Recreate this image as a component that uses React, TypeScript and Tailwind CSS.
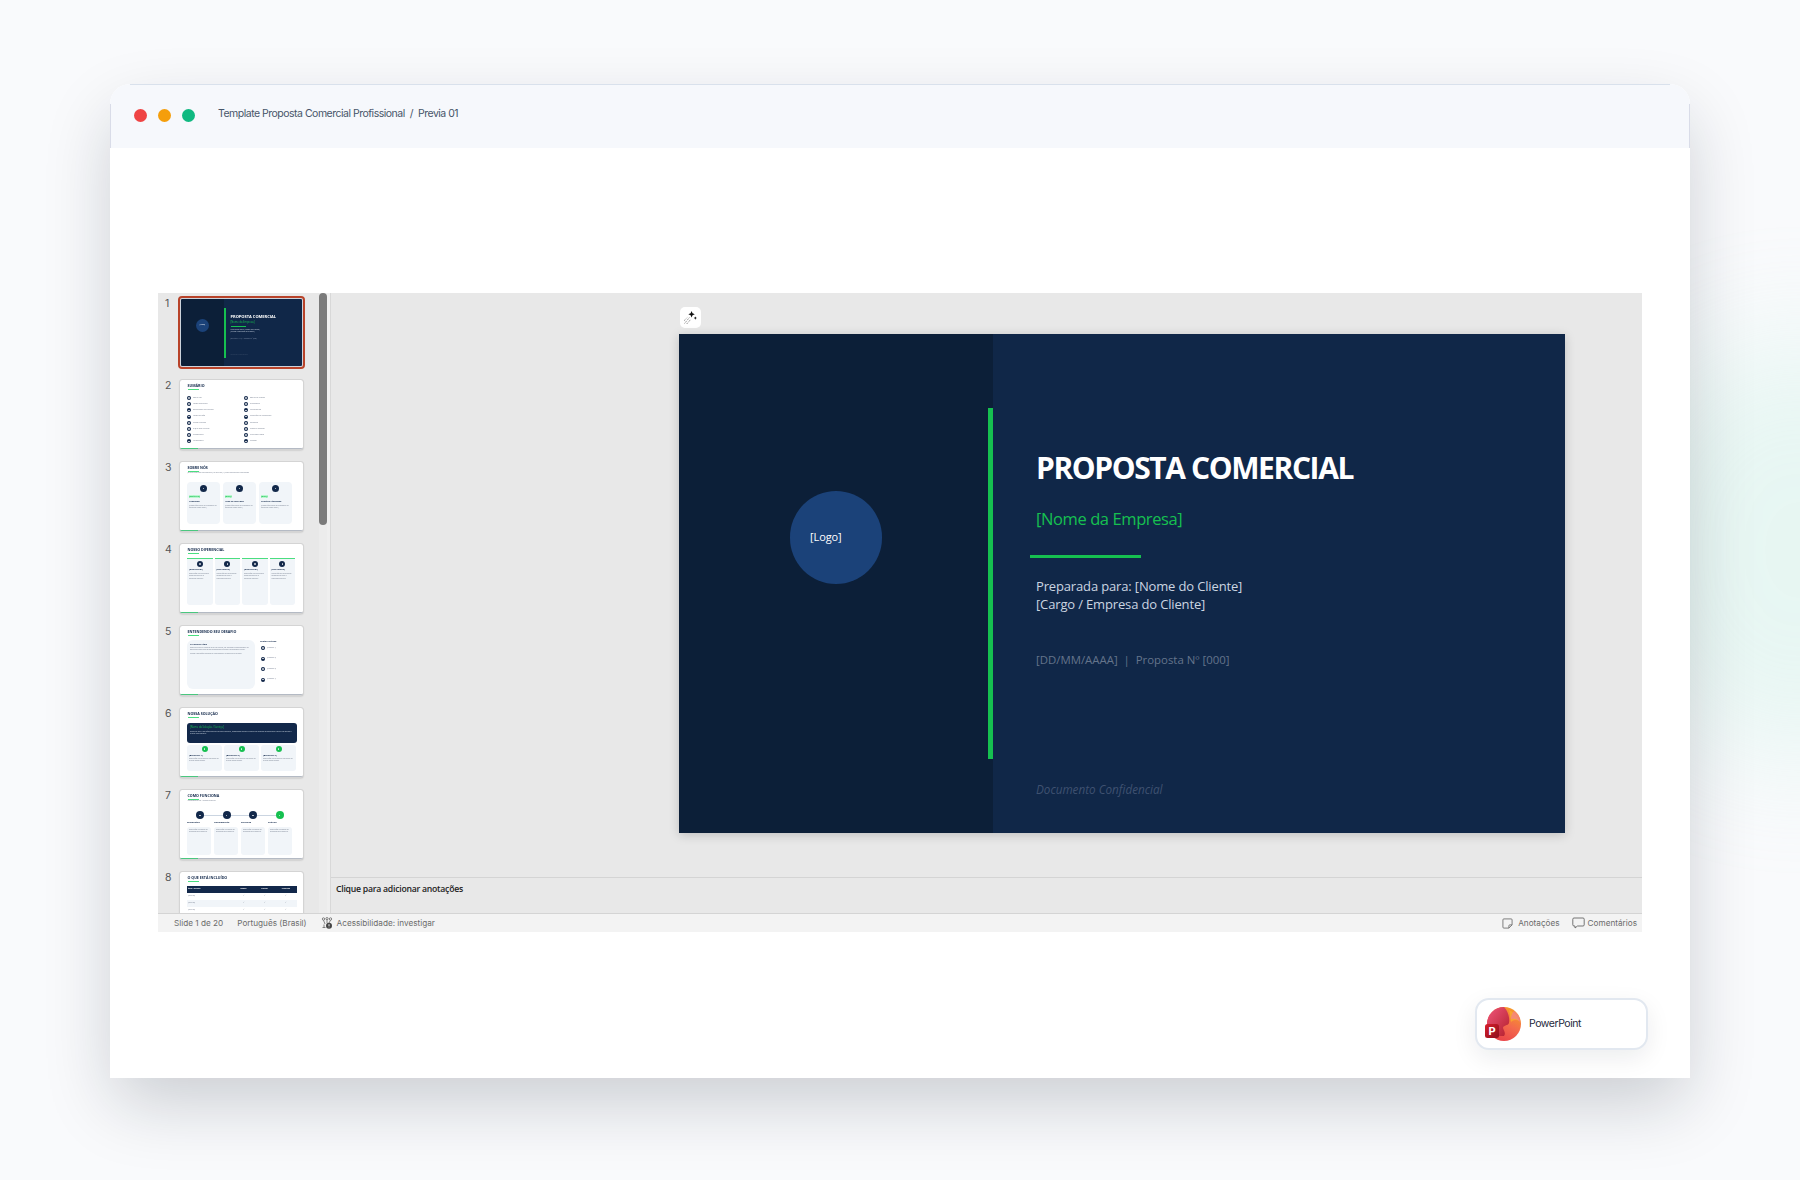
import React from 'react';

const FONT = { fontFamily: '"Open Sans", sans-serif' };

const Thumb: React.FC<{ children: React.ReactNode; selected?: boolean }> = ({ children, selected }) => (
  <div
    className={`relative w-[123px] h-[69px] shrink-0 rounded-[2px] bg-white overflow-hidden ${
      selected ? 'outline-2 outline-[#b8432a] border border-[#cdd3dc]' : 'shadow-[0_1px_2px_rgba(0,0,0,0.3)] outline outline-[#d4d4d4]'
    }`}
  >
    <div className="h-full blur-[0.3px]">{children}</div>
    {!selected && (
      <div className="absolute bottom-0 left-0 right-0 h-[1px] bg-[#b4bac4]">
        <div className="w-[18px] h-[1px] bg-[#4ac77f]" />
      </div>
    )}
  </div>
);

const ThumbTitle: React.FC<{ title: string }> = ({ title }) => (
  <div className="pl-[7.5px] pt-[4px]">
    <div className="text-[3.6px] leading-[4px] font-bold text-[#12284a]">{title}</div>
    <div className="w-[11px] h-[1px] mt-[1px] bg-[#4ade80]" />
  </div>
);

const Dot: React.FC<{ size?: string; green?: boolean }> = ({ size = 'w-[4px] h-[4px]', green }) => (
  <div className={`${size} rounded-full shrink-0 flex items-center justify-center ${green ? 'bg-[#16c050]' : 'bg-[#12284a]'}`}>
    <div className="w-[1.5px] h-[1.5px] rounded-full bg-white/80" />
  </div>
);

const Tiny: React.FC<{ children: React.ReactNode; className?: string }> = ({ children, className }) => (
  <div className={`text-[1.8px] leading-[2.4px] text-[#7b8494] ${className ?? ''}`}>{children}</div>
);

const Head: React.FC<{ children: React.ReactNode; className?: string }> = ({ children, className }) => (
  <div className={`text-[2.2px] leading-[3px] font-bold text-[#12284a] ${className ?? ''}`}>{children}</div>
);

const Slide1Thumb = () => (
  <div className="flex h-full bg-[#102748] relative">
    <div className="w-[43px] bg-[#0c1f38] flex items-start justify-center pt-[20px]">
      <div className="w-[13px] h-[13px] rounded-full bg-[#1b4279] flex items-center justify-center text-[1.8px] text-white">[Logo]</div>
    </div>
    <div className="w-[1.5px] h-[50px] mt-[9px] bg-[#16c050]" />
    <div className="pl-[5px] pt-[15px]">
      <div className="text-[4px] leading-[5px] font-bold text-white">PROPOSTA COMERCIAL</div>
      <div className="text-[2.6px] leading-[3px] mt-[2px] text-[#16c050]">[Nome da Empresa]</div>
      <div className="w-[15px] h-[1px] mt-[2px] bg-[#16c050]" />
      <div className="text-[1.8px] leading-[2.2px] mt-[2px] text-[#cbd5e1]">Preparada para: [Nome do Cliente]<br />[Cargo / Empresa do Cliente]</div>
      <div className="text-[1.6px] leading-[2px] mt-[4px] text-[#8090a8]">[DD/MM/AAAA] | Proposta Nº [000]</div>
      <div className="text-[1.6px] leading-[2px] mt-[14px] italic text-[#3c4e6a]">Documento Confidencial</div>
    </div>
  </div>
);

const sumarioLeft = ['Sobre Nós', 'Nosso Diferencial', 'Entendendo Seu Desafio', 'Nossa Solução', 'Como Funciona', 'O Que Está Incluído', 'Cronograma', 'Metodologia'];
const sumarioRight = ['Equipe do Projeto', 'Diagnóstico', 'Investimento', 'Condições de Pagamento', 'Garantias', 'Cases de Sucesso', 'Próximos Passos', 'Contato'];

const Slide2Thumb = () => (
  <>
    <ThumbTitle title="SUMÁRIO" />
    <div className="flex pl-[7px] pt-[6px]">
      {[sumarioLeft, sumarioRight].map((col, i) => (
        <div key={i} className="w-[57px] flex flex-col gap-[2.2px]">
          {col.map((t) => (
            <div key={t} className="flex items-center gap-[2px] h-[4px]">
              <Dot />
              <Tiny>{t}</Tiny>
            </div>
          ))}
        </div>
      ))}
    </div>
  </>
);

const Slide3Thumb = () => (
  <>
    <ThumbTitle title="SOBRE NÓS" />
    <Tiny className="pl-[7.5px]">[Breve descrição da empresa] Há mais de [X] anos entregando resultados</Tiny>
    <div className="flex gap-[3px] pl-[7px] pt-[7.5px]">
      {['[Métrica]', '[000]+', '[000]+'].map((m, i) => (
        <div key={i} className="w-[33px] h-[42px] rounded-[4px] bg-[#f1f5f9] pt-[3px] px-[2px]">
          <div className="flex justify-center"><Dot size="w-[7px] h-[7px]" /></div>
          <div className="text-[2.4px] leading-[3px] mt-[3px] font-bold text-[#16c050] bg-[#bbf7d0] w-fit">{m}</div>
          <Head className="mt-[2px]">{['Fundação', 'Anos de Mercado', 'Clientes Atendidos'][i]}</Head>
          <Tiny className="mt-[2px]">[Descrição breve do indicador da empresa neste item]</Tiny>
        </div>
      ))}
    </div>
  </>
);

const Slide4Thumb = () => (
  <>
    <ThumbTitle title="NOSSO DIFERENCIAL" />
    <div className="flex gap-[2px] pl-[7px] pt-[4px]">
      {[0, 1, 2, 3].map((i) => (
        <div key={i} className="w-[25.5px] h-[47px] rounded-b-[3px] bg-[#f1f5f9] border-t border-[#4ade80] pt-[2px] px-[2px]">
          <div className="flex justify-center"><Dot size="w-[6px] h-[6px]" /></div>
          <Head className="mt-[1px]">[Diferencial]</Head>
          <Tiny className="mt-[2px]">Descrição do diferencial competitivo que a empresa oferece</Tiny>
        </div>
      ))}
    </div>
  </>
);

const Slide5Thumb = () => (
  <>
    <ThumbTitle title="ENTENDENDO SEU DESAFIO" />
    <div className="flex pl-[7px] pt-[4px]">
      <div className="w-[68px] h-[49px] rounded-[6px] bg-[#f1f5f9] px-[3px] pt-[3px]">
        <Head>O Cenário Atual</Head>
        <Tiny className="mt-[1px]">Descreva aqui o cenário atual do cliente, os desafios identificados e as oportunidades que foram mapeadas durante o diagnóstico inicial.</Tiny>
        <Tiny className="mt-[1px]">Como a situação impacta os resultados e o negócio do cliente.</Tiny>
      </div>
      <div className="pl-[5px]">
        <Head>Pontos Críticos</Head>
        <div className="flex flex-col gap-[6.5px] pt-[3px] pl-[1px]">
          {[0, 1, 2, 3].map((i) => (
            <div key={i} className="flex items-center gap-[2px]">
              <Dot />
              <Tiny>[Desafio {i + 1}]</Tiny>
            </div>
          ))}
        </div>
      </div>
    </div>
  </>
);

const Slide6Thumb = () => (
  <>
    <ThumbTitle title="NOSSA SOLUÇÃO" />
    <div className="ml-[7px] mt-[4.5px] w-[110px] h-[20px] rounded-[3px] bg-[#12284a] px-[3px] pt-[2px]">
      <div className="text-[2.6px] leading-[4px] text-[#16c050]">[Nome da Solução / Serviço]</div>
      <div className="text-[1.7px] leading-[2.4px] mt-[1px] text-[#cbd5e1]">Descreva aqui a solução oferecida de forma objetiva, destacando como ela resolve os desafios apresentados e quais resultados o cliente pode esperar.</div>
    </div>
    <div className="flex gap-[2px] pl-[7px] pt-[2.5px]">
      {[1, 2, 3].map((i) => (
        <div key={i} className="w-[35px] h-[26px] rounded-[3px] bg-[#f1f5f9] pt-[1px] px-[2px]">
          <div className="flex justify-center"><Dot size="w-[6px] h-[6px]" green /></div>
          <Head className="mt-[2px]">[Benefício {i}]</Head>
          <Tiny className="mt-[1px]">Descrição do benefício entregue ao cliente nesta etapa.</Tiny>
        </div>
      ))}
    </div>
  </>
);

const Slide7Thumb = () => (
  <>
    <ThumbTitle title="COMO FUNCIONA" />
    <Tiny className="pl-[7.5px]">Metodologia em 4 etapas simples</Tiny>
    <div className="relative flex pl-[16px] pt-[9px] gap-[18.5px]">
      <div className="absolute left-[20px] right-[20px] top-[13px] h-[0.5px] bg-[#cbd5e1]" />
      {[0, 1, 2, 3].map((i) => (
        <div key={i} className="relative"><Dot size="w-[8px] h-[8px]" green={i === 3} /></div>
      ))}
    </div>
    <div className="flex gap-[3px] pl-[7px] pt-[2px]">
      {['Diagnóstico', 'Planejamento', 'Execução', 'Entrega'].map((t) => (
        <div key={t} className="w-[24px]">
          <Head className="mb-[2.5px]">{t}</Head>
          <div className="h-[28px] rounded-[3px] bg-[#f1f5f9] px-[2px] pt-[2px]">
            <Tiny>Descrição da etapa do processo de trabalho.</Tiny>
          </div>
        </div>
      ))}
    </div>
  </>
);

const Slide8Thumb = () => (
  <>
    <ThumbTitle title="O QUE ESTÁ INCLUÍDO" />
    <div className="ml-[7px] mt-[3.5px] w-[110px]">
      <div className="flex h-[7px] items-center bg-[#12284a] text-[1.8px] font-bold text-white">
        <div className="w-[46px] pl-[1px]">Item / Serviço</div>
        <div className="w-[21px] text-center">Básico</div>
        <div className="w-[21px] text-center">Padrão</div>
        <div className="w-[22px] text-center">Premium</div>
      </div>
      {[0, 1, 2].map((i) => (
        <div key={i} className={`flex h-[7px] items-center text-[1.8px] text-[#7b8494] ${i === 1 ? 'bg-[#f1f5f9]' : ''}`}>
          <div className="w-[46px] pl-[1px]">[Serviço]</div>
          <div className="w-[21px] text-center">✓</div>
          <div className="w-[21px] text-center">✓</div>
          <div className="w-[22px] text-center">✓</div>
        </div>
      ))}
    </div>
  </>
);

const thumbs = [Slide1Thumb, Slide2Thumb, Slide3Thumb, Slide4Thumb, Slide5Thumb, Slide6Thumb, Slide7Thumb, Slide8Thumb];

const SparkleIcon = () => (
  <svg viewBox="0 0 14 14" className="w-[15px] h-[15px]">
    <path d="M8 1l.9 2.1L11 4l-2.1.9L8 7l-.9-2.1L5 4l2.1-.9z" fill="#111" />
    <path d="M11.5 6l.5 1 1 .5-1 .5-.5 1-.5-1-1-.5 1-.5z" fill="#111" />
    <path d="M1.5 12.5L6 7M3.5 13L7 9M1 10l3-3" stroke="#666" strokeWidth="0.8" strokeDasharray="1 1" fill="none" />
  </svg>
);

const AccessIcon = () => (
  <svg viewBox="0 0 12 12" className="w-[12px] h-[12px]" fill="none" stroke="#666" strokeWidth="0.8">
    <circle cx="2.5" cy="2" r="1.2" />
    <circle cx="6" cy="1.6" r="1.1" />
    <circle cx="9.5" cy="2" r="1.2" />
    <path d="M2.5 3.2L4 7M6 2.7V6M9.5 3.2L8 6M1.5 10.5h3M3 7.5v3" />
    <circle cx="8" cy="8.7" r="3" fill="#444" stroke="none" />
    <path d="M8 7.2v2M8 9.8v.5" stroke="#fff" strokeWidth="0.9" />
  </svg>
);

const NoteIcon = () => (
  <svg viewBox="0 0 12 12" className="w-[11px] h-[11px]" fill="none" stroke="#666" strokeWidth="0.9">
    <path d="M2 1h8a1 1 0 0 1 1 1v5.5L7.5 11H2a1 1 0 0 1-1-1V2a1 1 0 0 1 1-1z" />
    <path d="M11 7.5H8.5a1 1 0 0 0-1 1V11" />
  </svg>
);

const ChatIcon = () => (
  <svg viewBox="0 0 13 12" className="w-[13px] h-[12px]" fill="none" stroke="#666" strokeWidth="0.9">
    <path d="M2 1h9a1.2 1.2 0 0 1 1.2 1.2v5.6A1.2 1.2 0 0 1 11 9H5.5L3 11V9H2A1.2 1.2 0 0 1 .8 7.8V2.2A1.2 1.2 0 0 1 2 1z" />
  </svg>
);

const PowerPointIcon = () => (
  <svg viewBox="0 0 36 36" className="w-[36px] h-[36px] shrink-0">
    <defs>
      <linearGradient id="pp-a" x1="0.8" y1="0" x2="0.3" y2="1">
        <stop offset="0" stopColor="#f7a023" />
        <stop offset="0.5" stopColor="#f46a4c" />
        <stop offset="1" stopColor="#e8404a" />
      </linearGradient>
      <linearGradient id="pp-b" x1="0" y1="0" x2="1" y2="1">
        <stop offset="0" stopColor="#f0567c" />
        <stop offset="1" stopColor="#b3202c" />
      </linearGradient>
      <linearGradient id="pp-c" x1="0" y1="0" x2="1" y2="1">
        <stop offset="0" stopColor="#d81e2c" />
        <stop offset="1" stopColor="#8d0f1c" />
      </linearGradient>
    </defs>
    <circle cx="19" cy="18" r="17" fill="url(#pp-a)" />
    <path d="M19 1a17 17 0 0 0-17 17c0 5 2 9 5 12h12c2-3 0-5-1-8 0-3 5-2 6-5 1-5-1-12-5-16z" fill="url(#pp-b)" />
    <path d="M24 4c5 2 9 6 10 11-3-2-6-1-8 1-1-4-1-9-2-12z" fill="#f9b12c" opacity="0.7" />
    <path d="M26 13c3-1 7 0 9 3 0-5-2-8-6-11-2 2-3 5-3 8z" fill="#f47ba0" opacity="0.6" />
    <rect x="0" y="18" width="14" height="14" rx="2.5" fill="url(#pp-c)" />
    <text x="7" y="29" textAnchor="middle" fontSize="11" fontWeight="700" fill="#fff" fontFamily="Inter, sans-serif">P</text>
  </svg>
);

const App: React.FC = () => {
  return (
    <div className="relative w-full h-[1180px] overflow-hidden bg-[#f9fafc] pt-[84px] px-[110px]" style={FONT}>
      {/* green glow on the right */}
      <div className="absolute right-[-180px] top-[340px] w-[360px] h-[420px] rounded-full bg-[#bfeede] opacity-30 blur-[60px]" />

      <div className="relative h-[994px] flex flex-col rounded-t-[20px] bg-white shadow-[0_28px_70px_-4px_rgba(15,23,42,0.2)]">
        {/* Window header */}
        <div className="relative h-[64px] shrink-0 flex items-center pl-[24px] pb-[4px] rounded-t-[20px] bg-[#f6f8fc]" style={{ fontFamily: 'Inter, sans-serif' }}>
          <div className="absolute top-0 left-[20px] right-[20px] h-[1px] bg-[#d9e1ec]" />
          <div className="absolute top-[20px] bottom-0 left-0 w-[1px] bg-[#d9dce8]" />
          <div className="absolute top-[20px] bottom-0 right-0 w-[1px] bg-[#d9dce8]" />
          <div className="flex gap-[11px] pt-[2px]">
            <div className="w-[13px] h-[13px] rounded-full bg-[#ef4444]" />
            <div className="w-[13px] h-[13px] rounded-full bg-[#f59e0b]" />
            <div className="w-[13px] h-[13px] rounded-full bg-[#10b981]" />
          </div>
          <div className="pl-[23px] text-[10.5px] tracking-[-0.5px] text-[#475569]">
            Template Proposta Comercial Profissional<span className="px-[5px]">/</span>Previa 01
          </div>
        </div>

        {/* Screenshot of PowerPoint */}
        <div className="pt-[145px] px-[48px]">
          <div className="h-[639px] flex flex-col bg-[#e8e8e8]">
            <div className="flex flex-1 min-h-0">
              {/* Slide sorter */}
              <div className="w-[161px] shrink-0 overflow-hidden pt-[5px] pl-[7px] flex flex-col gap-[13px]">
                {thumbs.map((Content, i) => (
                  <div key={i} className="flex shrink-0">
                    <div className="w-[15px] text-[10.5px] leading-[12px] text-[#555]" style={{ fontFamily: 'Inter, sans-serif' }}>{i + 1}</div>
                    <Thumb selected={i === 0}>
                      <Content />
                    </Thumb>
                  </div>
                ))}
              </div>
              <div className="w-[8px] shrink-0 bg-[#ececec]">
                <div className="w-[8px] h-[232px] rounded-full bg-[#7a7a7a]" />
              </div>
              <div className="w-[4px] shrink-0 bg-[#efefef] border-r border-[#d8d8d8]" />

              {/* Editor */}
              <div className="flex-1 min-w-0 flex flex-col">
                <div className="relative h-[584px] pt-[41px] pl-[348px]">
                  <div className="absolute left-[349px] top-[14px] w-[21px] h-[21px] rounded-[5px] bg-white flex items-center justify-center">
                    <SparkleIcon />
                  </div>
                  {/* Current slide */}
                  <div className="relative w-[886px] h-[499px] flex bg-[#102748] shadow-[0_2px_10px_rgba(0,0,0,0.18)]">
                    <div className="w-[314px] shrink-0 bg-[#0c1f38] flex items-start justify-center pt-[157px]">
                      <div className="w-[92px] h-[93px] rounded-full bg-[#1b4279] flex items-center pl-[20px] text-[11px] tracking-[-0.1px] text-white">[Logo]</div>
                    </div>
                    <div className="absolute left-[309px] top-[74px] w-[5px] h-[351px] bg-[#16c050]" />
                    <div className="pl-[43px] pt-[113px]">
                      <div className="text-[30px] leading-[42px] font-bold text-white tracking-[-1.4px] whitespace-nowrap">PROPOSTA COMERCIAL</div>
                      <div className="mt-[18px] text-[16.5px] leading-[24px] tracking-[-0.4px] text-[#16c050]">[Nome da Empresa]</div>
                      <div className="-ml-[6px] mt-[24px] w-[111px] h-[3px] bg-[#16c050]" />
                      <div className="mt-[19px] text-[13px] leading-[18px] tracking-[-0.15px] text-[#cbd5e1]">
                        Preparada para: [Nome do Cliente]
                        <br />
                        [Cargo / Empresa do Cliente]
                      </div>
                      <div className="mt-[38.5px] text-[11.4px] leading-[16px] text-[#64748b] whitespace-pre">[DD/MM/AAAA]  |  Proposta Nº [000]</div>
                      <div className="mt-[113px] text-[11.7px] leading-[16px] italic text-[#3f5170]">Documento Confidencial</div>
                    </div>
                  </div>
                </div>
                <div className="flex-1 border-t border-[#d4d4d4] pl-[5px] pt-[4px] text-[8.7px] leading-[14px] tracking-[-0.25px] font-semibold text-[#222]">
                  Clique para adicionar anotações
                </div>
              </div>
            </div>

            {/* Status bar */}
            <div className="h-[19px] shrink-0 flex items-center bg-[#f3f3f3] border-t border-[#d4d4d4] pl-[16px] pr-[5px] text-[8.2px] text-[#6b6b6b]" style={{ fontFamily: 'Inter, sans-serif' }}>
              <span>Slide 1 de 20</span>
              <span className="pl-[14px]">Português (Brasil)</span>
              <span className="pl-[14px] pr-[4px]"><AccessIcon /></span>
              <span>Acessibilidade: investigar</span>
              <span className="ml-auto pr-[5px]"><NoteIcon /></span>
              <span>Anotações</span>
              <span className="pl-[12px] pr-[3px]"><ChatIcon /></span>
              <span>Comentários</span>
            </div>
          </div>
        </div>

        {/* App badge */}
        <div className="absolute left-[1365px] top-[914px] w-[173px] h-[52px] flex items-center gap-[8px] pl-[8px] rounded-[14px] bg-white border-2 border-[#e2e8f0] shadow-[0_8px_24px_rgba(15,23,42,0.08)]">
          <PowerPointIcon />
          <span className="pb-[1px] text-[10.5px] tracking-[-0.45px] text-[#1e293b]" style={{ fontFamily: 'Inter, sans-serif' }}>PowerPoint</span>
        </div>
      </div>
    </div>
  );
};

export default App;
